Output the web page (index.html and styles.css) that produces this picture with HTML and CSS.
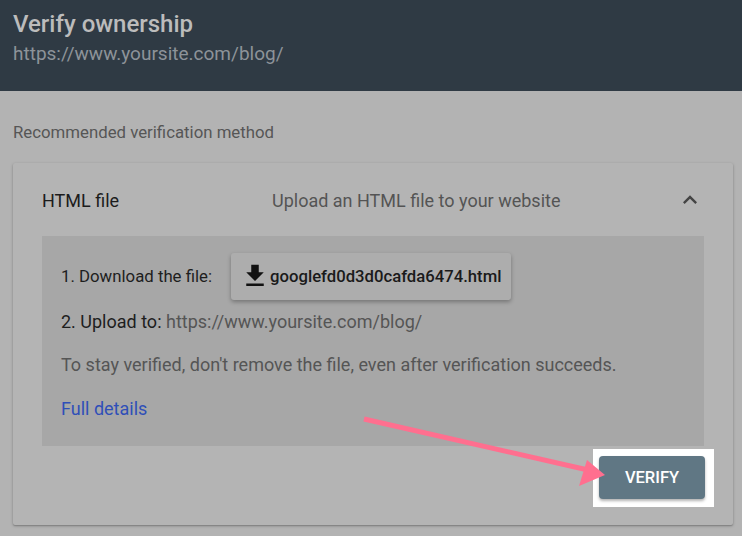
FILE: index.html
```html
<!DOCTYPE html>
<html>
<head>
<meta charset="utf-8">
<link rel="stylesheet" href="styles.css">
</head>
<body>
<header class="top">
  <h1 class="title">Verify ownership</h1>
  <div class="site">https://www.yoursite.com/blog/</div>
</header>
<main class="main">
  <div class="label">Recommended verification method</div>
  <section class="card">
    <div class="card-head">
      <div class="method">HTML file</div>
      <div class="desc">Upload an HTML file to your website</div>
      <svg class="chev" viewBox="0 0 24 24" width="28" height="28"><path d="M12 8l-6 6 1.41 1.41L12 10.83l4.59 4.58L18 14z" fill="#444"/></svg>
    </div>
    <div class="panel">
      <div class="step1">
        <span class="dark small">1. Download the file:</span>
        <button class="file-btn">
          <svg viewBox="0 0 24 24" width="30" height="30"><path d="M19 9h-4V3H9v6H5l7 7 7-7zM5 18v2h14v-2H5z" fill="#111"/></svg>
          <span>googlefd0d3d0cafda6474.html</span>
        </button>
      </div>
      <div class="step2"><span class="dark">2. Upload to:</span> https://www.yoursite.com/blog/</div>
      <div class="note">To stay verified, don't remove the file, even after verification succeeds.</div>
      <a class="details" href="#">Full details</a>
    </div>
    <div class="card-foot">
      <div class="hl"><button class="verify">VERIFY</button></div>
    </div>
  </section>
</main>
<svg class="arrow" width="742" height="536" viewBox="0 0 742 536">
  <line x1="364" y1="419" x2="588" y2="470" stroke="#ff6f8f" stroke-width="5" stroke-linecap="butt"/>
  <polygon points="605,475 579,486 587,460" fill="#ff6f8f"/>
</svg>
</body>
</html>
```
FILE: styles.css
```css
* { box-sizing: border-box; }
html, body { margin: 0; padding: 0; }
body {
  width: 742px;
  height: 536px;
  overflow: hidden;
  background: #b3b3b3;
  font-family: Roboto, "Liberation Sans", Arial, sans-serif;
  position: relative;
}
.top {
  background: #2f3a44;
  height: 91px;
  padding: 9px 13px 0;
}
.title {
  margin: 0;
  font-size: 24px;
  font-weight: 500;
  color: #bcbcbc;
  line-height: 30px;
}
.site {
  font-size: 19px;
  color: #8d9399;
  line-height: 26px;
  margin-top: 2px;
}
.main {
  padding: 0 9px 0 13px;
}
.label {
  font-size: 16.8px;
  color: #565656;
  line-height: 22px;
  padding-top: 30px;
  height: 72px;
}
.card {
  background: #b4b4b4;
  height: 362px;
  box-shadow: 0 1px 3px rgba(0,0,0,0.25), 0 1px 1px rgba(0,0,0,0.12);
  border-radius: 2px;
  padding: 0 29px;
}
.card-head {
  height: 73px;
  display: flex;
  align-items: center;
  padding-top: 1px;
}
.method {
  font-size: 18px;
  color: #1c1c1c;
  width: 230px;
}
.desc {
  font-size: 18px;
  color: #545454;
  flex: 1;
}
.panel {
  background: #a7a7a7;
  height: 210px;
  padding: 16px 19px 0;
  color: #555;
  font-size: 18px;
}
.dark { color: #1e1e1e; }
.small { font-size: 16.8px; }
.step1 {
  display: flex;
  align-items: center;
  gap: 19px;
  height: 48px;
}
.file-btn {
  display: flex;
  align-items: center;
  gap: 0;
  height: 47px;
  padding: 0 10px 0 9px;
  border: 0;
  border-radius: 3px;
  background: #adadad;
  box-shadow: 0 2px 4px rgba(0,0,0,0.3);
  font-family: inherit;
  font-size: 16.7px;
  font-weight: 500;
  color: #1a1a1a;
}
.step2 {
  margin-top: 10px;
  line-height: 24px;
}
.note {
  margin-top: 19px;
  line-height: 24px;
}
.details {
  display: inline-block;
  margin-top: 20px;
  color: #2f4fb8;
  text-decoration: none;
  line-height: 24px;
}
.card-foot {
  display: flex;
  justify-content: flex-end;
  padding-top: 3px;
  margin-right: -10px;
}
.hl {
  background: #fff;
  padding: 7px 9px 8px 6px;
}
.verify {
  display: block;
  width: 106px;
  height: 43px;
  border: 0;
  border-radius: 4px;
  background: #607784;
  color: #fff;
  font-family: inherit;
  font-size: 16.5px;
  font-weight: 500;
  box-shadow: 0 2px 3px rgba(0,0,0,0.3);
}
.arrow {
  position: absolute;
  left: 0;
  top: 0;
  pointer-events: none;
}
```
